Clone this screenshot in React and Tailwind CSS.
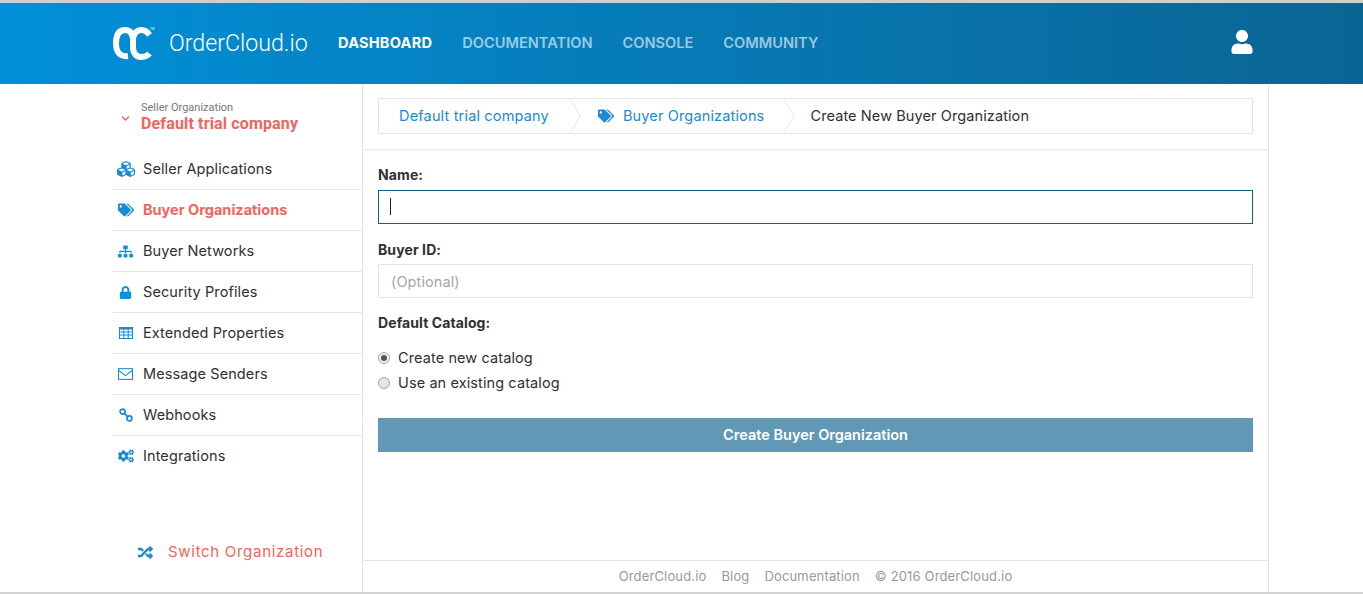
import { FaCubes, FaTags, FaSitemap, FaLock, FaRandom, FaUser, FaCogs, FaChevronDown } from "react-icons/fa";

const NAV = ["DASHBOARD", "DOCUMENTATION", "CONSOLE", "COMMUNITY"];

function HooksIcon({ className }) {
  return (
    <svg viewBox="0 0 14 14" className={className} fill="none" stroke="currentColor" strokeWidth="1.7">
      <circle cx="3.6" cy="3.6" r="2.5" />
      <circle cx="10.4" cy="10.4" r="2.5" />
      <path d="M5.4 5.4 8.6 8.6" />
    </svg>
  );
}

function GridIcon({ className }) {
  return (
    <svg viewBox="0 0 14 12" className={className} fill="none" stroke="currentColor" strokeWidth="1">
      <rect x="0.5" y="0.5" width="13" height="11" />
      <rect x="0" y="0" width="14" height="2.5" fill="currentColor" stroke="none" />
      <path d="M0 5h14M0 8h14M4.8 2v10M9.2 2v10" />
    </svg>
  );
}

function MailIcon({ className }) {
  return (
    <svg viewBox="0 0 14 11" className={className} fill="none" stroke="currentColor" strokeWidth="1">
      <rect x="0.5" y="0.5" width="13" height="10" />
      <path d="M0.5 2 7 7l6.5-5" />
    </svg>
  );
}

const MENU = [
  { label: "Seller Applications", icon: FaCubes, size: "text-[18px]" },
  { label: "Buyer Organizations", icon: FaTags, size: "text-[16px]", active: true },
  { label: "Buyer Networks", icon: FaSitemap, size: "text-[15px]" },
  { label: "Security Profiles", icon: FaLock, size: "text-[13px] text-[#0f92dc]" },
  { label: "Extended Properties", icon: GridIcon, size: "w-[14px] h-[12px]" },
  { label: "Message Senders", icon: MailIcon, size: "w-[15px] h-[12px]" },
  { label: "Webhooks", icon: HooksIcon, size: "w-[14px] h-[14px]" },
  { label: "Integrations", icon: FaCogs, size: "text-[16px]" },
];

function Logo() {
  return (
    <svg viewBox="0 0 44 34" className="w-[44px] h-[34px]" fill="none" stroke="white" strokeWidth="6">
      <path d="M15 30C7 31 3 26 3 17.500S6 4 12 4s8 5 8 11v6c0 6 3 10 8.500 10 3 0 6-1 8-3.500" />
      <path d="M36.500 9c-2-3-5-5-8-5-5 0-8.500 4-8.500 11" />
      <text x="37" y="4" fontSize="3" fill="white" stroke="none">TM</text>
    </svg>
  );
}

function Chevron() {
  return (
    <svg viewBox="0 0 12 36" className="w-[12px] h-[34px] shrink-0" fill="none" stroke="#e4e4e4">
      <path d="M0.5 0 11.500 18 0.5 36" />
    </svg>
  );
}

export default function App() {
  return (
    <div className="h-screen bg-white flex flex-col overflow-hidden text-[#2f3033] font-['Inter',sans-serif] text-[14.5px] tracking-[0.1px]">
      <div className="h-[3px] shrink-0 bg-[#cfcfcf]" />

      {/* Header */}
      <header className="h-[81px] shrink-0 flex items-center pl-[113px] pr-[109px] bg-gradient-to-r from-[#0090d9] to-[#0a6594]">
        <div className="flex items-center gap-[12px] w-[225px]">
          <Logo />
          <span className="text-white font-['Roboto',sans-serif] font-light text-[23.2px] tracking-normal">OrderCloud.io</span>
        </div>
        <nav className="flex gap-[30px] text-[14.6px] font-semibold tracking-normal">
          {NAV.map((item, i) => (
            <span key={item} className={i === 0 ? "text-white font-bold tracking-[0.2px]" : "text-white/60"}>{item}</span>
          ))}
        </nav>
        <FaUser className="ml-auto mb-[4px] text-white text-[24px]" />
      </header>

      <div className="flex-1 min-h-0 flex pl-[113px]">
        {/* Sidebar */}
        <aside className="w-[250px] shrink-0 border-r border-[#e4e4e4] flex flex-col">
          <div className="h-[65px] shrink-0 flex items-center pt-[2px]">
            <FaChevronDown className="ml-[8px] mr-[11px] mt-[1px] text-[#f0655d] text-[9px]" />
            <div className="flex flex-col font-['Roboto',sans-serif] tracking-normal">
              <span className="text-[11px] leading-[13px] text-[#777]">Seller Organization</span>
              <span className="text-[16px] leading-[20px] font-bold tracking-[0.15px] text-[#f0655d]">Default trial company</span>
            </div>
          </div>
          <ul>
            {MENU.map((m, i) => {
              const Icon = m.icon;
              return (
                <li key={m.label} className={`h-[41px] flex items-center border-b ${i < MENU.length - 1 ? "border-[#e4e4e4]" : "border-transparent"}`}>
                  <span className="w-[30px] flex justify-center pr-[5px] text-[#1a8ad4]">
                    <Icon className={m.size} />
                  </span>
                  <span className={m.active ? "font-bold text-[#f0655d] tracking-normal" : ""}>{m.label}</span>
                </li>
              );
            })}
          </ul>
          <div className="mt-auto h-[82px] flex items-center pl-[25px] pt-[3px] gap-[15px] text-[#f0655d] text-[15px] tracking-[0.7px]">
            <FaRandom className="text-[#1a8ad4] text-[15px]" />
            <span>Switch Organization</span>
          </div>
        </aside>

        {/* Main */}
        <main className="w-[906px] shrink-0 border-r border-[#e4e4e4] flex flex-col">
          <div className="h-[66px] shrink-0 px-[15px] pt-[14px] border-b border-[#e8e8e8] shadow-[0_1px_3px_rgba(0,0,0,0.04)]">
            <div className="h-[36px] flex items-center border border-[#e4e4e4]">
              <span className="pl-[20px] pr-[20px] text-[#1a8ad4] tracking-[0.17px]">Default trial company</span>
              <Chevron />
              <FaTags className="ml-[17px] mr-[9px] text-[#1a8ad4] text-[16px]" />
              <span className="pr-[19px] text-[#1a8ad4] tracking-[0.15px]">Buyer Organizations</span>
              <Chevron />
              <span className="ml-[15px]">Create New Buyer Organization</span>
            </div>
          </div>

          <form className="flex-1 px-[15px] pt-[16px]">
            <label className="block font-bold text-[14px] leading-[18px]">Name:</label>
            <div className="relative mt-[6px]">
              <input className="w-full h-[34px] px-[12px] border border-[#0f6189] outline-none" />
              <span className="absolute left-[12px] top-[8px] w-px h-[17px] bg-[#222]" />
            </div>
            <label className="block mt-[17px] font-bold text-[14px] leading-[18px]">Buyer ID:</label>
            <input placeholder="(Optional)" className="block mt-[5px] w-full h-[34px] px-[12px] border border-[#e4e4e4] outline-none placeholder:text-[#a5a5a5]" />
            <label className="block mt-[16px] font-bold text-[14px] leading-[18px]">Default Catalog:</label>
            <div className="mt-[13px] h-[25px] flex items-center gap-[8px]">
              <span className="w-[12px] h-[12px] rounded-full border border-[#a8a8a8] bg-[#eee] flex items-center justify-center">
                <span className="w-[6px] h-[6px] rounded-full bg-[#555]" />
              </span>
              <span>Create new catalog</span>
            </div>
            <div className="h-[25px] flex items-center gap-[8px]">
              <span className="w-[12px] h-[12px] rounded-full border border-[#a8a8a8] bg-[#e4e4e4]" />
              <span>Use an existing catalog</span>
            </div>
            <button type="button" className="mt-[23px] w-full h-[34px] bg-[#6098b6] text-white font-semibold text-[14.5px] tracking-normal">
              Create Buyer Organization
            </button>
          </form>

          <footer className="h-[32px] shrink-0 border-t border-[#e4e4e4] flex items-center justify-center gap-[15px] text-[13px] text-[#999] tracking-[0.15px]">
            <span>OrderCloud.io</span>
            <span>Blog</span>
            <span>Documentation</span>
            <span>© 2016 OrderCloud.io</span>
          </footer>
        </main>
      </div>
      <div className="h-[2px] shrink-0 bg-[#d4d4d4]" />
    </div>
  );
}
